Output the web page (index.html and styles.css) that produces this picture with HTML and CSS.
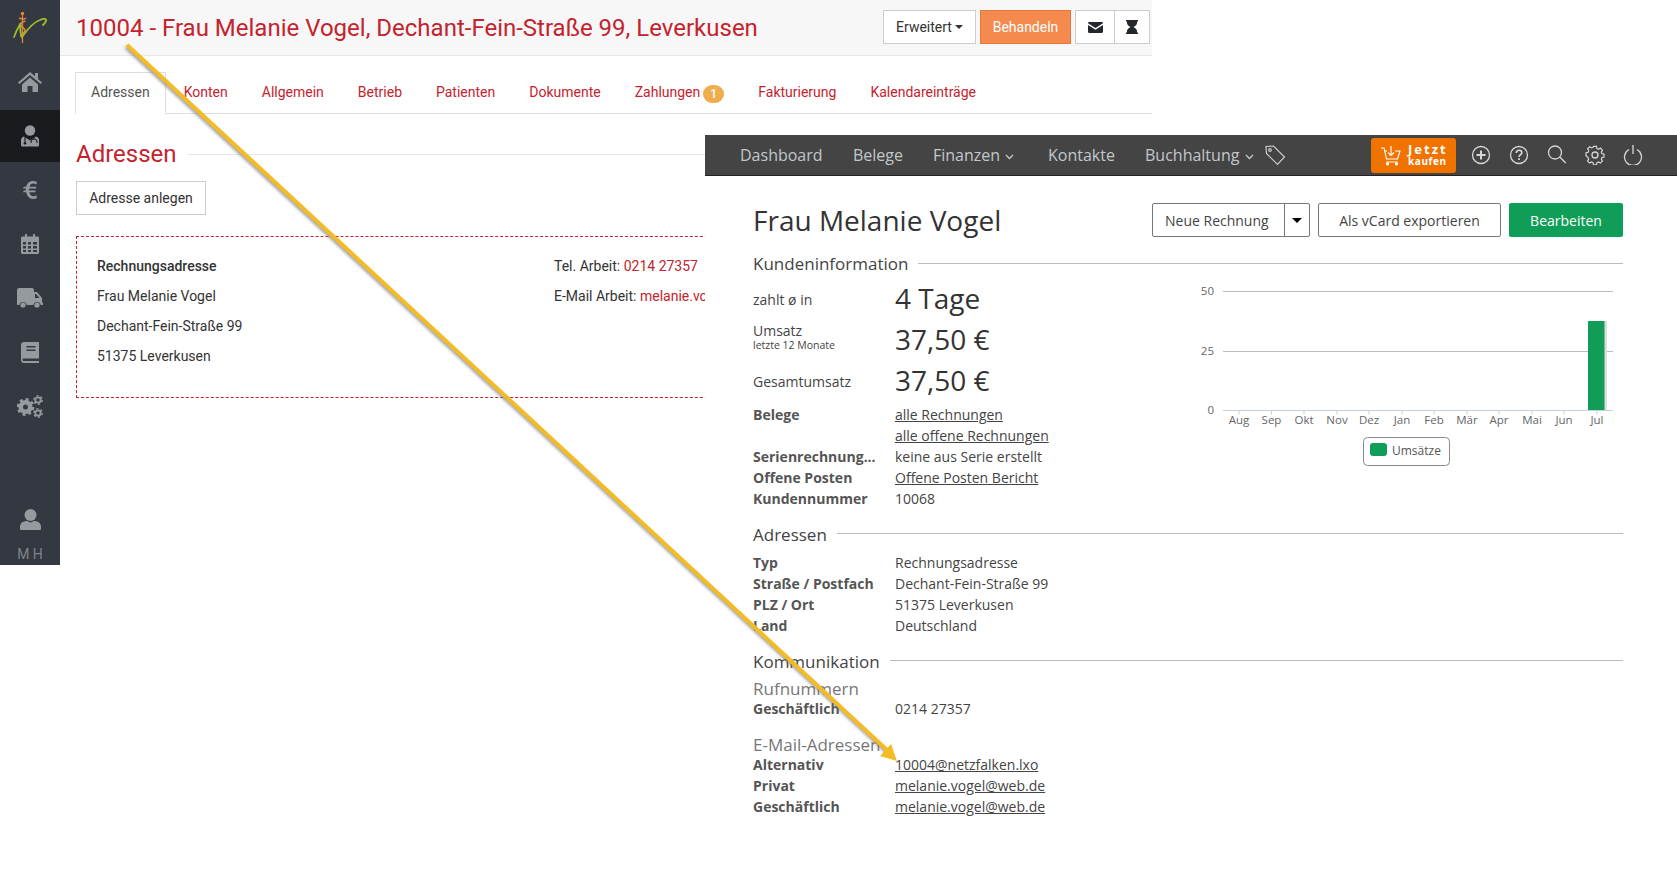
FILE: index.html
```html
<!doctype html>
<html lang="de">

<head>
    <meta charset="UTF-8">
    <title>10004 - Frau Melanie Vogel</title>
    <link rel="stylesheet" href="styles.css">
</head>

<body>
    <!-- linkes Fenster: Praxisverwaltung -->
    <div class="win-left">
        <div class="side">
            <div class="logo">
                <svg width="60" height="54" viewBox="0 0 60 54" fill="none">
                    <path d="M22.500 12v31" stroke="#e8833a" stroke-width="1.300" />
                    <circle cx="22.500" cy="13.500" r="1.700" fill="#e8833a" />
                    <path d="M19 18c3 1.500 5 1.500 7 0M25.500 21c-4 1-6.500 3-4.500 5s5.500 3 3.500 6-4.500 2-3.500 5" stroke="#e8833a" stroke-width="1.500" />
                    <path d="M14 37C16 31 19 26 20.500 23.500 20 29 20 33 22 37 27 30 33 22 40 20c4-2 7-1 6 1s-2 3-3 4" stroke="#9cbc2c" stroke-width="1.800" stroke-linecap="round" />
                </svg>
            </div>
            <a class="side-item item-home">
                <svg width="24" height="21" viewBox="0 0 24 21"><path d="M12 1 0 11.500 1.400 13 12 4l10.600 9 1.400-1.500-4-3.600V2h-3v3.200zM4 13.500V21h5.500v-6h5v6H20v-7.500L12 6.500z" /></svg>
            </a>
            <a class="side-item active">
                <svg width="18" height="22" viewBox="0 0 18 22"><circle cx="9" cy="5.500" r="5.200" /><path d="M3 11.500C1 12 0 13.500 0 15.500V20c0 1 .5 1.500 1.500 1.500h15c1 0 1.500-.5 1.500-1.500v-4.500c0-2-1-3.500-3-4l-6 4z" /><path d="M4 12v5M13 12v2c-2 0-3 1-3 4M13 14c2 0 3 1 3 4" stroke="#1a1c20" stroke-width="1.100" fill="none" /><circle cx="4" cy="18.200" r="1.300" fill="#1a1c20" /></svg>
            </a>
            <a class="side-item">
                <svg width="14" height="18" viewBox="0 0 14 18"><path d="M14 1.200C12.800.4 11.500 0 10 0 6.500 0 4 2.300 3.200 5.700H.8L0 7.500h3L2.900 9v.5H.8L0 11.300h3.200C4 15.300 6.500 18 10.200 18c1.400 0 2.700-.4 3.800-1.200l-.6-2.500c-.9.700-1.900 1-3 1-2 0-3.500-1.600-4-4h5.800l.6-1.800H6.100V9l.1-1.500h6.600l.6-1.800H6.600C7.100 3.700 8.400 2.500 10.300 2.500c1 0 2 .3 3 .9z" /></svg>
            </a>
            <a class="side-item">
                <svg width="18" height="20" viewBox="0 0 18 20"><path fill-rule="evenodd" d="M4 0h2v2.500h6V0h2v2.500h2.500c.9 0 1.500.6 1.500 1.500v14.500c0 .9-.6 1.500-1.500 1.500h-15C.6 20 0 19.400 0 18.500V4c0-.9.6-1.500 1.500-1.500H4zM2 8v2.500h3V8zm5 0v2.500h3V8zm5 0v2.500h4V8zM2 12v2.500h3V12zm5 0v2.500h3V12zm5 0v2.500h4V12zM2 16v2h3v-2zm5 0v2h3v-2zm5 0v2h4v-2z" /></svg>
            </a>
            <a class="side-item">
                <svg width="26" height="20" viewBox="0 0 26 20"><path fill-rule="evenodd" d="M2 0h13c1 0 2 .8 2 2v2h3l5 6v4.500h1V17h-2.300a3.800 3.800 0 0 0-7.400 0H9.700a3.800 3.800 0 0 0-7.400 0H1c-.6 0-1-.4-1-1V2C0 .8 1 0 2 0zm16 6v4h4.500L19 6z" /><circle cx="6" cy="17" r="2.600" /><circle cx="20" cy="17" r="2.600" /></svg>
            </a>
            <a class="side-item">
                <svg width="18" height="21" viewBox="0 0 18 21"><path fill-rule="evenodd" d="M3 0h15v16.500H3c-1 0-1.500.6-1.500 1.200S2 19 3 19h15v2H3c-2 0-3-1.400-3-3V3c0-1.600 1-3 3-3zm2.500 4v1.500h9V4zm0 3.500V9h9V7.500z" /></svg>
            </a>
            <a class="side-item">
                <svg class="gears" width="26" height="23" viewBox="0 0 26 23">
                    <circle cx="8.500" cy="12" r="4.800" stroke-width="4.600" />
                    <circle cx="8.500" cy="12" r="7.600" stroke-width="2.600" stroke-dasharray="2.950 3" />
                    <circle cx="21" cy="5" r="2.700" stroke-width="1.800" />
                    <circle cx="21" cy="5" r="4.200" stroke-width="1.400" stroke-dasharray="2.200 2.200" />
                    <circle cx="21" cy="18" r="2.700" stroke-width="1.800" />
                    <circle cx="21" cy="18" r="4.200" stroke-width="1.400" stroke-dasharray="2.200 2.200" />
                </svg>
            </a>
            <div class="side-user">
                <svg width="21" height="21" viewBox="0 0 21 21"><circle cx="10.500" cy="6" r="6" /><path d="M0 18c0-4 3-6 7-6l3.500 1.500L14 12c4 0 7 2 7 6v1.500c0 1-.5 1.500-1.500 1.500h-18C.5 21 0 20.500 0 19.500z" /></svg>
                <span class="side-name">M H</span>
            </div>
        </div>
        <div class="left-main">
            <div class="left-head">
                <h1 class="left-title">10004 - Frau Melanie Vogel, Dechant-Fein-Straße 99, Leverkusen</h1>
                <div class="left-btns">
                    <a class="btn btn-more">Erweitert <i class="caret"></i></a>
                    <a class="btn btn-orange">Behandeln</a>
                    <div class="btn-group">
                        <a class="btn btn-icon">
                            <svg width="15" height="11" viewBox="0 0 15 11" fill="#23262b"><path d="M0 1.200C0 .5.500 0 1.200 0h12.600c.7 0 1.200.5 1.200 1.200L7.500 6zM0 3l7.500 4.700L15 3v6.800c0 .7-.5 1.200-1.200 1.200H1.200C.5 11 0 10.500 0 9.800z" /></svg>
                        </a>
                        <a class="btn btn-icon">
                            <svg width="12" height="14" viewBox="0 0 12 14" fill="#23262b"><path d="M0 0h12v1.500h-1V3c0 2-2 3-3.500 4C9 8 11 9 11 11v1.500h1V14H0v-1.500h1V11c0-2 2-3 3.500-4C3 6 1 5 1 3V1.500H0z" /></svg>
                        </a>
                    </div>
                </div>
            </div>
            <div class="left-body">
                <ul class="tabs">
                    <li class="tab active">Adressen</li>
                    <li class="tab">Konten</li>
                    <li class="tab">Allgemein</li>
                    <li class="tab">Betrieb</li>
                    <li class="tab">Patienten</li>
                    <li class="tab">Dokumente</li>
                    <li class="tab">Zahlungen<span class="badge">1</span></li>
                    <li class="tab">Fakturierung</li>
                    <li class="tab">Kalendareinträge</li>
                </ul>
                <div class="left-section">
                    <h2>Adressen</h2>
                    <span class="rule"></span>
                </div>
                <a class="btn btn-add">Adresse anlegen</a>
                <div class="addr-box">
                    <div class="addr-col">
                        <p><b>Rechnungsadresse</b></p>
                        <p>Frau Melanie Vogel</p>
                        <p>Dechant-Fein-Straße 99</p>
                        <p>51375 Leverkusen</p>
                    </div>
                    <div class="addr-col addr-contact">
                        <p>Tel. Arbeit: <a>0214 27357</a></p>
                        <p>E-Mail Arbeit: <a>melanie.vo</a></p>
                    </div>
                </div>
            </div>
        </div>
    </div>

    <!-- rechtes Fenster: Rechnungsprogramm -->
    <div class="win-right">
        <div class="nav">
            <a class="nav-link nav-dash">Dashboard</a>
            <a class="nav-link nav-bel">Belege</a>
            <a class="nav-link nav-fin">Finanzen <svg class="chev" width="9" height="6" viewBox="0 0 9 6"><path d="M1 1l3.500 3.500L8 1" /></svg></a>
            <a class="nav-link nav-kon">Kontakte</a>
            <a class="nav-link nav-buch">Buchhaltung <svg class="chev" width="9" height="6" viewBox="0 0 9 6"><path d="M1 1l3.500 3.500L8 1" /></svg></a>
            <svg class="nav-tag" width="21" height="21" viewBox="0 0 21 21" fill="none" stroke="#c9ccce" stroke-width="1.200"><path d="M1 1.500 8.500 1l11 11-7 7.500L1.500 8.500z" /><circle cx="5" cy="5" r="1.300" /></svg>
            <a class="buy">
                <svg width="20" height="21" viewBox="0 0 20 21" fill="none" stroke="#fff" stroke-width="1.100"><path d="M0 3h3l2.500 11h11L19 6h-5M6 6h-2M10 1v9M7 7.500l3 3 3-3M5 17h12" /><circle cx="6.500" cy="19" r="1" fill="#fff" /><circle cx="15.500" cy="19" r="1" fill="#fff" /></svg>
                <span class="buy-text"><b class="buy-big">Jetzt</b><b class="buy-small">kaufen</b></span>
            </a>
            <div class="nav-icons">
                <svg width="20" height="20" viewBox="0 0 20 20"><circle cx="10" cy="10" r="8.500" /><path d="M10 5.500v9M5.500 10h9" stroke-width="2" /></svg>
                <svg width="20" height="20" viewBox="0 0 20 20"><circle cx="10" cy="10" r="8.500" /><path d="M7.300 8c0-1.700 1.200-2.700 2.800-2.700s2.700 1 2.700 2.400c0 2.100-2.800 2-2.800 4.300" stroke-width="1.600" /><path d="M10 13.300v1.800" stroke-width="1.800" /></svg>
                <svg width="20" height="20" viewBox="0 0 20 20"><circle cx="8" cy="7.500" r="6.500" /><path d="M12.800 12l6 6" /></svg>
                <svg width="20" height="20" viewBox="0 0 20 20"><path d="M8.300 1h3.400l.5 2.400 1.700.8 2.100-1.300 2.300 2.400-1.300 2 .7 1.800 2.300.5v3.300l-2.300.5-.7 1.800 1.300 2-2.300 2.300-2.100-1.200-1.700.7-.5 2.400H8.300l-.5-2.400-1.700-.7-2.100 1.200-2.300-2.300 1.300-2-.7-1.800L0 11.400V8.100l2.300-.5.700-1.800-1.300-2L4 1.400l2.100 1.300 1.700-.8z" transform="translate(1 .5) scale(.9)" /><circle cx="10" cy="10" r="3" /></svg>
                <svg width="20" height="20" viewBox="0 0 20 20"><path d="M6 4.500a8.500 8.500 0 1 0 8 0M10 0v9" /></svg>
            </div>
        </div>
        <div class="content">
            <div class="top-row">
                <h1 class="cust-name">Frau Melanie Vogel</h1>
                <div class="top-btns">
                    <div class="split">
                        <a class="rbtn split-main">Neue Rechnung</a>
                        <a class="rbtn split-caret"><i class="caret caret-big"></i></a>
                    </div>
                    <a class="rbtn rbtn-vcard">Als vCard exportieren</a>
                    <a class="rbtn rbtn-green">Bearbeiten</a>
                </div>
            </div>

            <div class="sec-head sec-kunde"><span>Kundeninformation</span><i></i></div>
            <div class="info-row">
                <div class="info-left">
                    <div class="stat stat-first"><span class="stat-label">zahlt ø in</span><span class="stat-val">4 Tage</span></div>
                    <div class="stat stat-second"><span class="stat-label">Umsatz<small>letzte 12 Monate</small></span><span class="stat-val">37,50 €</span></div>
                    <div class="stat stat-third"><span class="stat-label">Gesamtumsatz</span><span class="stat-val">37,50 €</span></div>
                    <div class="kv"><b>Belege</b><a>alle Rechnungen</a></div>
                    <div class="kv"><b></b><a>alle offene Rechnungen</a></div>
                    <div class="kv"><b>Serienrechnung...</b><span>keine aus Serie erstellt</span></div>
                    <div class="kv"><b>Offene Posten</b><a>Offene Posten Bericht</a></div>
                    <div class="kv"><b>Kundennummer</b><span>10068</span></div>
                </div>
                <div class="chart">
                    <svg width="460" height="198" viewBox="0 -8 460 198">
                        <g class="grid">
                            <path d="M53 1.500h390M53 61.500h390" />
                        </g>
                        <g class="ax-y">
                            <text x="44" y="5">50</text>
                            <text x="44" y="65">25</text>
                            <text x="44" y="124">0</text>
                        </g>
                        <rect x="420" y="31" width="17" height="90" fill="#dedede" />
                        <rect x="418" y="31" width="16.500" height="89.500" fill="#0f9d58" />
                        <path class="ax-x" d="M53 120.500h390M69 120.500v4M101.500 120.500v4M134 120.500v4M167 120.500v4M199 120.500v4M232 120.500v4M264 120.500v4M297 120.500v4M329 120.500v4M362 120.500v4M394 120.500v4M427 120.500v4" />
                        <g class="ax-lab">
                            <text x="69" y="134">Aug</text>
                            <text x="101.500" y="134">Sep</text>
                            <text x="134" y="134">Okt</text>
                            <text x="167" y="134">Nov</text>
                            <text x="199" y="134">Dez</text>
                            <text x="232" y="134">Jan</text>
                            <text x="264" y="134">Feb</text>
                            <text x="297" y="134">Mär</text>
                            <text x="329" y="134">Apr</text>
                            <text x="362" y="134">Mai</text>
                            <text x="394" y="134">Jun</text>
                            <text x="427" y="134">Jul</text>
                        </g>
                        <rect x="193.500" y="147.500" width="86" height="28" rx="4" fill="#fff" stroke="#8a8a8a" />
                        <rect x="200" y="153" width="17" height="13" rx="3" fill="#0f9d58" />
                        <text class="leg" x="222" y="165">Umsätze</text>
                    </svg>
                </div>
            </div>

            <div class="sec-head sec-addr"><span>Adressen</span><i></i></div>
            <div class="kv"><b>Typ</b><span>Rechnungsadresse</span></div>
            <div class="kv"><b>Straße / Postfach</b><span>Dechant-Fein-Straße 99</span></div>
            <div class="kv"><b>PLZ / Ort</b><span>51375 Leverkusen</span></div>
            <div class="kv"><b>Land</b><span>Deutschland</span></div>

            <div class="sec-head sec-komm"><span>Kommunikation</span><i></i></div>
            <h4 class="sub">Rufnummern</h4>
            <div class="kv"><b>Geschäftlich</b><span>0214 27357</span></div>
            <h4 class="sub sub-mail">E-Mail-Adressen</h4>
            <div class="kv"><b>Alternativ</b><a>10004@netzfalken.lxo</a></div>
            <div class="kv"><b>Privat</b><a>melanie.vogel@web.de</a></div>
            <div class="kv"><b>Geschäftlich</b><a>melanie.vogel@web.de</a></div>
        </div>
    </div>

    <!-- Pfeil liegt über beiden Fenstern -->
    <svg class="arrow" width="1677" height="894" viewBox="0 0 1677 894">
        <g class="arrow-shadow">
            <path d="M126 47 888 753" stroke="#777" stroke-width="4" fill="none" />
        </g>
        <path d="M127 45 889 752" stroke="#f4bc22" stroke-width="4" fill="none" />
        <path d="M897 761 880 756 891 744z" fill="#f4bc22" />
    </svg>
</body>

</html>
```

FILE: styles.css
```css
* {
    margin: 0;
    padding: 0;
    box-sizing: border-box;
}

body {
    position: relative;
    width: 1677px;
    height: 894px;
    overflow: hidden;
    background: #fff;
    font-family: "Open Sans", sans-serif;
}

a {
    text-decoration: none;
}

/* linkes Fenster */
.win-left {
    position: absolute;
    left: 0;
    top: 0;
    width: 1152px;
    height: 565px;
    display: flex;
    font-family: Roboto, sans-serif;
    font-size: 14px;
    color: #333;
}

.side {
    width: 60px;
    flex: none;
    background: #343840;
    display: flex;
    flex-direction: column;
    gap: 2px;
    fill: #96999e;
}

.logo {
    height: 54px;
}

.logo svg {
    display: block;
}

.side-item {
    height: 52px;
    display: flex;
    align-items: center;
    justify-content: center;
}

.side-item.active {
    background: #191b1f;
}

.item-home svg {
    margin-top: -2px;
}

.gears {
    fill: none;
    stroke: #96999e;
}

.side-user {
    margin-top: auto;
    display: flex;
    flex-direction: column;
    align-items: center;
    gap: 16px;
    padding-bottom: 3px;
}

.side-name {
    color: #7f848b;
    font-size: 14px;
    line-height: 16px;
}

.left-main {
    flex: 1;
    min-width: 0;
}

.left-head {
    height: 56px;
    background: #f7f7f7;
    border-bottom: 1px solid #e7e7e7;
    display: flex;
    align-items: center;
    padding: 0 2px 1px 16px;
}

.left-title {
    font-size: 24px;
    font-weight: 400;
    color: #c4232d;
    white-space: nowrap;
    flex: 1;
    margin-top: 2px;
}

.left-btns {
    display: flex;
    gap: 4px;
}

.btn {
    display: inline-flex;
    align-items: center;
    justify-content: center;
    height: 34px;
    padding: 0 12px;
    background: #fff;
    border: 1px solid #ccc;
    color: #333;
}

.btn-more {
    width: 93px;
    padding: 0;
}

.btn-orange {
    width: 91px;
    padding: 0;
    background: #f58a4f;
    border-color: #e5773a;
    color: #fff;
}

.btn-group {
    display: flex;
}

.btn-icon {
    width: 40px;
    padding: 0;
}

.btn-icon + .btn-icon {
    margin-left: -1px;
    width: 36px;
}

.caret {
    display: inline-block;
    margin-left: 3px;
    border-top: 4px solid #333;
    border-left: 4px solid transparent;
    border-right: 4px solid transparent;
}

.left-body {
    padding: 16px 0 0 15px;
}

.tabs {
    display: flex;
    list-style: none;
    height: 42px;
    border-bottom: 1px solid #ddd;
}

.tab {
    padding: 0 15px;
    margin-right: 4px;
    height: 42px;
    line-height: 40px;
    color: #c4232d;
    white-space: nowrap;
}

.tab.active {
    color: #555;
    background: #fff;
    border: 1px solid #ddd;
    border-bottom-color: #fff;
    line-height: 38px;
    margin-right: 3px;
}

.badge {
    display: inline-block;
    width: 21px;
    height: 18px;
    margin-left: 3px;
    border-radius: 9px;
    background: #f0ad4e;
    color: #fff;
    font-size: 12px;
    font-weight: 500;
    line-height: 18px;
    text-align: center;
    vertical-align: -1px;
}

.left-section {
    display: flex;
    align-items: center;
    gap: 11px;
    margin: 25px 0 0 1px;
    height: 30px;
}

.left-section h2 {
    font-size: 24px;
    font-weight: 400;
    color: #c4232d;
}

.rule {
    flex: 1;
    height: 1px;
    background: #e7e7e7;
}

.btn-add {
    margin: 12px 0 0 1px;
    width: 130px;
    padding: 0;
}

.addr-box {
    margin: 21px 0 0 1px;
    height: 162px;
    border: 1px dashed #c4232d;
    display: flex;
    padding: 14px 0 0 20px;
}

.addr-col {
    width: 457px;
}

.addr-contact {
    width: 151px;
    overflow: hidden;
}

.addr-col p {
    height: 30px;
    line-height: 30px;
    white-space: nowrap;
}

.addr-col b {
    font-weight: 500;
}

.addr-col a {
    color: #c4232d;
}

/* rechtes Fenster */
.win-right {
    position: absolute;
    left: 705px;
    top: 135px;
    width: 972px;
    height: 759px;
    background: #fff;
    color: #444;
}

.nav {
    height: 41px;
    background: #444;
    border-bottom: 1px solid #222;
    display: flex;
    align-items: center;
    padding-left: 35px;
    font-size: 16px;
}

.nav-link {
    color: #c2c7cb;
    white-space: nowrap;
    margin-top: -1px;
}

.nav-dash {
    width: 113px;
}

.nav-bel {
    width: 80px;
}

.nav-fin {
    width: 115px;
}

.nav-kon {
    width: 97px;
}

.nav-buch {
    width: 120px;
}

.chev {
    fill: none;
    stroke: #c2c7cb;
    stroke-width: 1.4;
    margin-left: 1px;
    vertical-align: 1px;
}

.nav-tag {
    flex: none;
}

.buy {
    margin-left: 85px;
    width: 85px;
    height: 35px;
    background: #f07300;
    border-radius: 3px;
    display: flex;
    align-items: center;
    gap: 7px;
    padding-left: 10px;
    flex: none;
}

.buy-text {
    display: flex;
    flex-direction: column;
    color: #fff;
    line-height: 13px;
}

.buy-big {
    font-size: 13px;
    letter-spacing: 2px;
}

.buy-small {
    font-size: 10px;
    letter-spacing: .6px;
    line-height: 11px;
}

.nav-icons {
    display: flex;
    gap: 18px;
    margin-left: 15px;
}

.nav-icons svg {
    fill: none;
    stroke: #d5d7d9;
    stroke-width: 1.3;
}

.content {
    padding: 27px 54px 0 48px;
    font-size: 14px;
}

.top-row {
    display: flex;
    justify-content: space-between;
    align-items: center;
    height: 34px;
}

.cust-name {
    font-size: 28px;
    font-weight: 400;
    color: #333;
}

.top-btns {
    display: flex;
    gap: 8px;
}

.rbtn {
    display: flex;
    align-items: center;
    justify-content: center;
    height: 34px;
    border: 1px solid #777;
    border-radius: 2px;
    color: #444;
    background: #fff;
}

.split {
    display: flex;
}

.split-main {
    width: 133px;
    border-radius: 2px 0 0 2px;
    justify-content: flex-start;
    padding-left: 12px;
}

.split-caret {
    width: 26px;
    margin-left: -1px;
    border-radius: 0 2px 2px 0;
}

.caret-big {
    margin: 0;
    border-top-color: #000;
    border-top-width: 5px;
    border-left-width: 5px;
    border-right-width: 5px;
}

.rbtn-vcard {
    width: 183px;
}

.rbtn-green {
    width: 114px;
    background: #0f9d58;
    border-color: #0f9d58;
    color: #fff;
}

.sec-head {
    display: flex;
    align-items: center;
    gap: 10px;
    height: 24px;
    margin-top: 15px;
    font-size: 17px;
    color: #444;
}

.sec-head span {
    white-space: nowrap;
}

.sec-kunde span {
    margin-top: -2px;
}

.sec-head i {
    flex: 1;
    height: 1px;
    background: #bbb;
    margin-top: -2px;
}

.info-row {
    display: flex;
    justify-content: space-between;
}

.info-left {
    width: 460px;
}

.stat {
    display: grid;
    grid-template-columns: 142px 1fr;
    align-items: center;
}

.stat-first {
    height: 38px;
    margin-top: 3px;
}

.stat-first .stat-label {
    padding-top: 2px;
}

.stat-second {
    height: 38px;
    margin-top: 3px;
}

.stat-second .stat-label {
    padding-bottom: 5px;
}

.stat-third {
    height: 38px;
    margin-top: 3px;
}

.stat-third .stat-label {
    padding-top: 2px;
}

.stat-label {
    line-height: 15px;
}

.stat-label small {
    display: block;
    font-size: 10.500px;
    line-height: 10px;
    margin-top: 2px;
}

.stat-val {
    font-size: 28px;
    color: #333;
}

.kv {
    display: grid;
    grid-template-columns: 142px 1fr;
    height: 21px;
    line-height: 21px;
    white-space: nowrap;
}

.kv b {
    font-weight: 700;
    color: #555;
}

.kv a {
    color: #444;
    text-decoration: underline;
}

.info-left .kv:nth-of-type(4) {
    margin-top: 5px;
}

.chart {
    margin: 6px -7px 0 0;
    width: 460px;
    height: 198px;
}

.grid path {
    stroke: #bbb;
    fill: none;
}

.ax-x {
    stroke: #c0d0e0;
    fill: none;
}

.ax-y text {
    font-size: 11.500px;
    fill: #666;
    text-anchor: end;
}

.ax-lab text {
    font-size: 11.500px;
    fill: #666;
    text-anchor: middle;
}

.leg {
    font-size: 12px;
    fill: #555;
}

.sec-addr {
    margin-top: 13px;
}

.sec-addr + .kv {
    margin-top: 6px;
}

.sec-komm {
    margin-top: 13px;
}

.sub {
    font-size: 17px;
    font-weight: 400;
    color: #777;
    line-height: 22px;
    margin-top: 5px;
}

.sub + .kv {
    margin-top: -2px;
}

.sub-mail {
    margin-top: 15px;
}

/* Pfeil */
.arrow {
    position: absolute;
    left: 0;
    top: 0;
    pointer-events: none;
}

.arrow-shadow {
    filter: blur(1.500px);
    opacity: .7;
}
```
